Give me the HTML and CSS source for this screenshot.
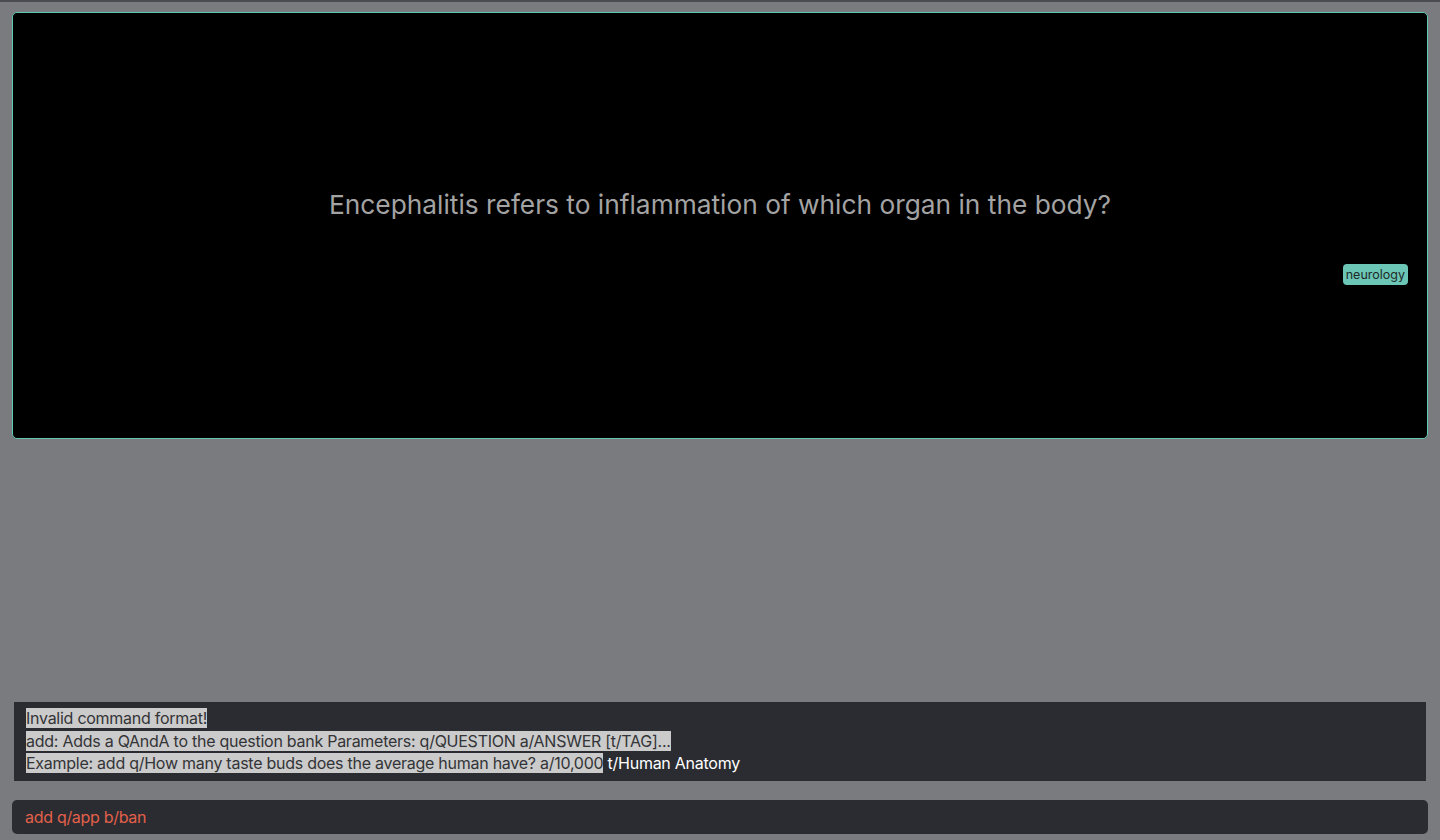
FILE: index.html
```html
<!DOCTYPE html>
<html>
<head>
<meta charset="utf-8">
<link rel="stylesheet" href="styles.css">
</head>
<body>
<div class="app">
  <div class="topline"></div>
  <main class="main">
    <section class="card">
      <div class="question">Encephalitis refers to inflammation of which organ in the body?</div>
      <div class="tags"><span class="tag">neurology</span></div>
    </section>
    <div class="spacer"></div>
    <section class="result">
      <div class="line"><span class="sel">Invalid command format!</span></div>
      <div class="line"><span class="sel">add: Adds a QAndA to the question bank Parameters: q/QUESTION a/ANSWER [t/TAG]...</span></div>
      <div class="line"><span class="sel">Example: add q/How many taste buds does the average human have? a/10,000</span> t/Human Anatomy</div>
    </section>
    <section class="command">add q/app b/ban</section>
  </main>
</div>
</body>
</html>
```
FILE: styles.css
```css
html, body {
  margin: 0;
  padding: 0;
  height: 100%;
}
body {
  background: #7a7b7f;
  font-family: Inter, "Noto Sans", sans-serif;
}
.app {
  height: 840px;
  display: flex;
  flex-direction: column;
}
.topline {
  height: 2px;
  background: #4b4c51;
}
.main {
  flex: 1;
  display: flex;
  flex-direction: column;
  padding: 10px 12px 6px 12px;
}
.card {
  height: 427px;
  box-sizing: border-box;
  background: #000;
  border: 1px solid #5ec8b4;
  border-radius: 5px;
  display: flex;
  flex-direction: column;
  align-items: center;
}
.question {
  margin-top: 175px;
  color: #a3a3a3;
  font-size: 26.3px;
  letter-spacing: 0;
  line-height: 34px;
}
.tags {
  align-self: flex-end;
  margin-top: 41px;
  margin-right: 19px;
}
.tag {
  display: inline-block;
  background: #6cc6b6;
  color: #1e2a28;
  font-size: 12.5px;
  line-height: 21px;
  padding: 0 3px;
  border-radius: 4px;
}
.spacer {
  flex: 1;
}
.result {
  margin: 0 2px;
  background: #2b2c31;
  padding: 5px 12px 7px 12px;
  height: 79px;
  box-sizing: border-box;
  color: #ffffff;
  font-size: 16px;
  line-height: 22.5px;
  letter-spacing: -0.26px;
}
.line {
  white-space: nowrap;
}
.sel {
  background: #cbcbcb;
  color: #333437;
}
.command {
  margin-top: 19px;
  background: #2b2c31;
  border-radius: 5px;
  height: 34px;
  box-sizing: border-box;
  padding: 0 13px;
  color: #e2604a;
  font-size: 16px;
  line-height: 34px;
  letter-spacing: -0.3px;
}
```
